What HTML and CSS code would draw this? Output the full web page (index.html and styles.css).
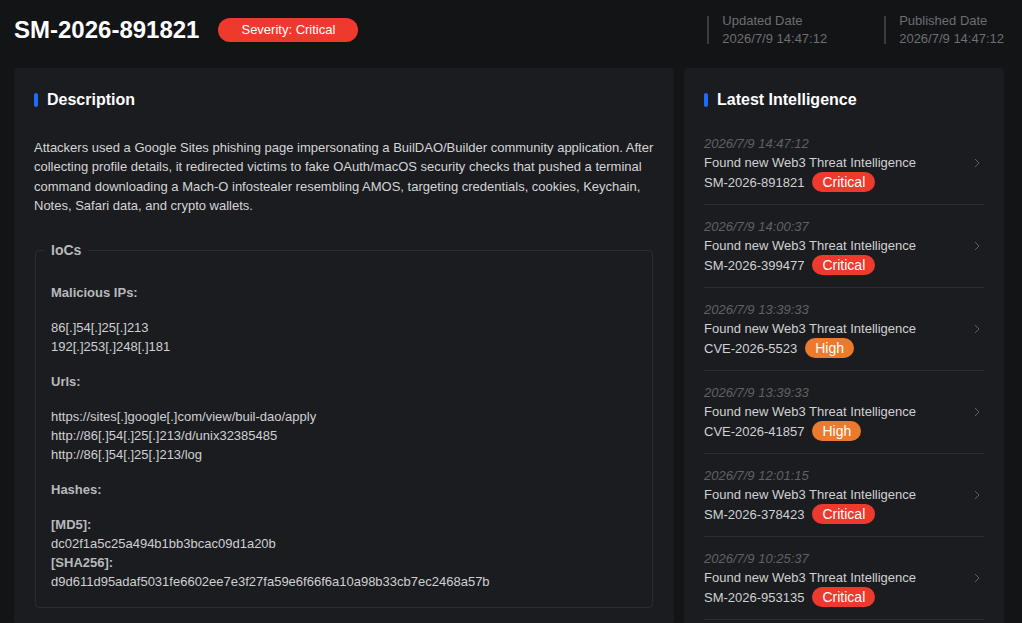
FILE: index.html
```html
<!DOCTYPE html>
<html lang="en">
  <head>
    <meta charset="UTF-8" />
    <meta name="viewport" content="width=device-width, initial-scale=1.0" />
    <title>SM-2026-891821</title>
    <link rel="stylesheet" href="styles.css">
  </head>
  <body>
    <header class="top">
      <div class="top-title">
        <h1>SM-2026-891821</h1>
        <span class="severity">Severity: Critical</span>
      </div>
      <div class="dates">
        <div class="date-item">
          <div>
            <div class="date-label">Updated Date</div>
            <div class="date-value">2026/7/9 14:47:12</div>
          </div>
        </div>
        <div class="date-item">
          <div>
            <div class="date-label">Published Date</div>
            <div class="date-value">2026/7/9 14:47:12</div>
          </div>
        </div>
      </div>
    </header>

    <main class="layout">
      <section class="card detail">
        <h2 class="card-title">Description</h2>
        <p class="desc">
          Attackers used a Google Sites phishing page impersonating a BuilDAO/Builder community application. After
          collecting profile details, it redirected victims to fake OAuth/macOS security checks that pushed a terminal
          command downloading a Mach-O infostealer resembling AMOS, targeting credentials, cookies, Keychain,
          Notes, Safari data, and crypto wallets.
        </p>

        <fieldset class="iocs">
          <legend>IoCs</legend>

          <div class="ioc-group">
            <div class="ioc-head">Malicious IPs:</div>
            <div>86[.]54[.]25[.]213</div>
            <div>192[.]253[.]248[.]181</div>
          </div>

          <div class="ioc-group">
            <div class="ioc-head">Urls:</div>
            <div>https://sites[.]google[.]com/view/buil-dao/apply</div>
            <div>http://86[.]54[.]25[.]213/d/unix32385485</div>
            <div>http://86[.]54[.]25[.]213/log</div>
          </div>

          <div class="ioc-group">
            <div class="ioc-head">Hashes:</div>
            <div class="hash-type">[MD5]:</div>
            <div>dc02f1a5c25a494b1bb3bcac09d1a20b</div>
            <div class="hash-type">[SHA256]:</div>
            <div>d9d611d95adaf5031fe6602ee7e3f27fa59e6f66f6a10a98b33cb7ec2468a57b</div>
          </div>
        </fieldset>
      </section>

      <aside class="card latest">
        <h2 class="card-title">Latest Intelligence</h2>
        <ul class="feed">
          <li class="feed-item">
            <div class="feed-body">
              <div class="feed-time">2026/7/9 14:47:12</div>
              <div class="feed-text">Found new Web3 Threat Intelligence</div>
              <div class="feed-id">SM-2026-891821 <span class="tag critical">Critical</span></div>
            </div>
            <svg class="chev" width="6" height="10" viewBox="0 0 6 10"><path d="M1 1l4 4-4 4" fill="none" stroke="currentColor" stroke-width="1"/></svg>
          </li>
          <li class="feed-item">
            <div class="feed-body">
              <div class="feed-time">2026/7/9 14:00:37</div>
              <div class="feed-text">Found new Web3 Threat Intelligence</div>
              <div class="feed-id">SM-2026-399477 <span class="tag critical">Critical</span></div>
            </div>
            <svg class="chev" width="6" height="10" viewBox="0 0 6 10"><path d="M1 1l4 4-4 4" fill="none" stroke="currentColor" stroke-width="1"/></svg>
          </li>
          <li class="feed-item">
            <div class="feed-body">
              <div class="feed-time">2026/7/9 13:39:33</div>
              <div class="feed-text">Found new Web3 Threat Intelligence</div>
              <div class="feed-id">CVE-2026-5523 <span class="tag high">High</span></div>
            </div>
            <svg class="chev" width="6" height="10" viewBox="0 0 6 10"><path d="M1 1l4 4-4 4" fill="none" stroke="currentColor" stroke-width="1"/></svg>
          </li>
          <li class="feed-item">
            <div class="feed-body">
              <div class="feed-time">2026/7/9 13:39:33</div>
              <div class="feed-text">Found new Web3 Threat Intelligence</div>
              <div class="feed-id">CVE-2026-41857 <span class="tag high">High</span></div>
            </div>
            <svg class="chev" width="6" height="10" viewBox="0 0 6 10"><path d="M1 1l4 4-4 4" fill="none" stroke="currentColor" stroke-width="1"/></svg>
          </li>
          <li class="feed-item">
            <div class="feed-body">
              <div class="feed-time">2026/7/9 12:01:15</div>
              <div class="feed-text">Found new Web3 Threat Intelligence</div>
              <div class="feed-id">SM-2026-378423 <span class="tag critical">Critical</span></div>
            </div>
            <svg class="chev" width="6" height="10" viewBox="0 0 6 10"><path d="M1 1l4 4-4 4" fill="none" stroke="currentColor" stroke-width="1"/></svg>
          </li>
          <li class="feed-item">
            <div class="feed-body">
              <div class="feed-time">2026/7/9 10:25:37</div>
              <div class="feed-text">Found new Web3 Threat Intelligence</div>
              <div class="feed-id">SM-2026-953135 <span class="tag critical">Critical</span></div>
            </div>
            <svg class="chev" width="6" height="10" viewBox="0 0 6 10"><path d="M1 1l4 4-4 4" fill="none" stroke="currentColor" stroke-width="1"/></svg>
          </li>
        </ul>
      </aside>
    </main>
  </body>
</html>
```

FILE: styles.css
```css
body {
  font-family: "Liberation Sans", Arial, sans-serif;
  background-color: #131416;
  color: #cfd0d2;
  margin: 0;
  padding: 0 18px 0 14px;
  font-size: 13px;
}

/* page header */
.top {
  display: flex;
  justify-content: space-between;
  align-items: center;
  height: 60px;
  margin-bottom: 8px;
}

.top-title {
  display: flex;
  align-items: center;
  gap: 19px;
}

h1 {
  margin: 0;
  font-size: 24px;
  line-height: 30px;
  font-weight: 700;
  color: #fff;
}

.severity {
  display: inline-block;
  background-color: #ee3a2d;
  color: #fff;
  font-size: 13px;
  line-height: 24px;
  padding: 0 23px;
  border-radius: 12px;
}

.dates {
  display: flex;
  gap: 57px;
}

.date-item {
  display: flex;
  align-items: center;
  gap: 13px;
  color: #6c6e72;
  line-height: 18px;
}

.date-item::before {
  content: "";
  width: 2px;
  height: 28px;
  background-color: #3a3c40;
}

/* two column body */
.layout {
  display: flex;
  gap: 10px;
  align-items: flex-start;
}

.card {
  background-color: #1b1c1f;
  border-radius: 4px;
  padding: 22px 20px 16px;
}

.detail {
  flex: 0 0 660px;
  box-sizing: border-box;
}

.latest {
  flex: 1;
}

.card-title {
  display: flex;
  align-items: center;
  gap: 9px;
  margin: 0;
  font-size: 16px;
  line-height: 20px;
  font-weight: 700;
  color: #fff;
}

.card-title::before {
  content: "";
  width: 4px;
  height: 14px;
  border-radius: 2px;
  background-color: #1e6bff;
}

.desc {
  margin: 28px 0 26px;
  line-height: 19.3px;
  color: #d4d5d7;
}

.iocs {
  margin: 0 1px;
  padding: 23px 15px 16px;
  border: 1px solid #2a2c30;
  border-radius: 4px;
  line-height: 19px;
}

.iocs legend {
  padding: 0 7px;
  margin-left: -7px;
  font-size: 14px;
  font-weight: 700;
  color: #b8b9bc;
}

.ioc-group {
  margin-bottom: 16px;
}

.ioc-group:last-child {
  margin-bottom: 0;
}

.ioc-head {
  font-weight: 700;
  color: #b8b9bc;
  margin-bottom: 16px;
}

.hash-type {
  font-weight: 700;
  color: #b8b9bc;
}

/* latest intelligence list */
.feed {
  list-style: none;
  margin: 12px 0 0;
  padding: 0;
}

.feed-item {
  display: flex;
  align-items: center;
  padding: 12px 0;
  border-bottom: 1px solid #2a2c30;
}

.feed-body {
  flex: 1;
  line-height: 19px;
}

.feed-time {
  font-style: italic;
  color: #5f6165;
}

.feed-text {
  color: #d0d1d3;
}

.feed-id {
  display: flex;
  align-items: center;
  gap: 8px;
  height: 20px;
  color: #d0d1d3;
}

.tag {
  display: inline-block;
  color: #fff;
  font-size: 14px;
  line-height: 20px;
  padding: 0 10px;
  border-radius: 10px;
}

.tag.critical {
  background-color: #ee3a2d;
}

.tag.high {
  background-color: #ec7a2c;
}

.chev {
  color: #5f6165;
  margin: 0 4px 0 0;
  align-self: flex-start;
  margin-top: 24px;
}
```
